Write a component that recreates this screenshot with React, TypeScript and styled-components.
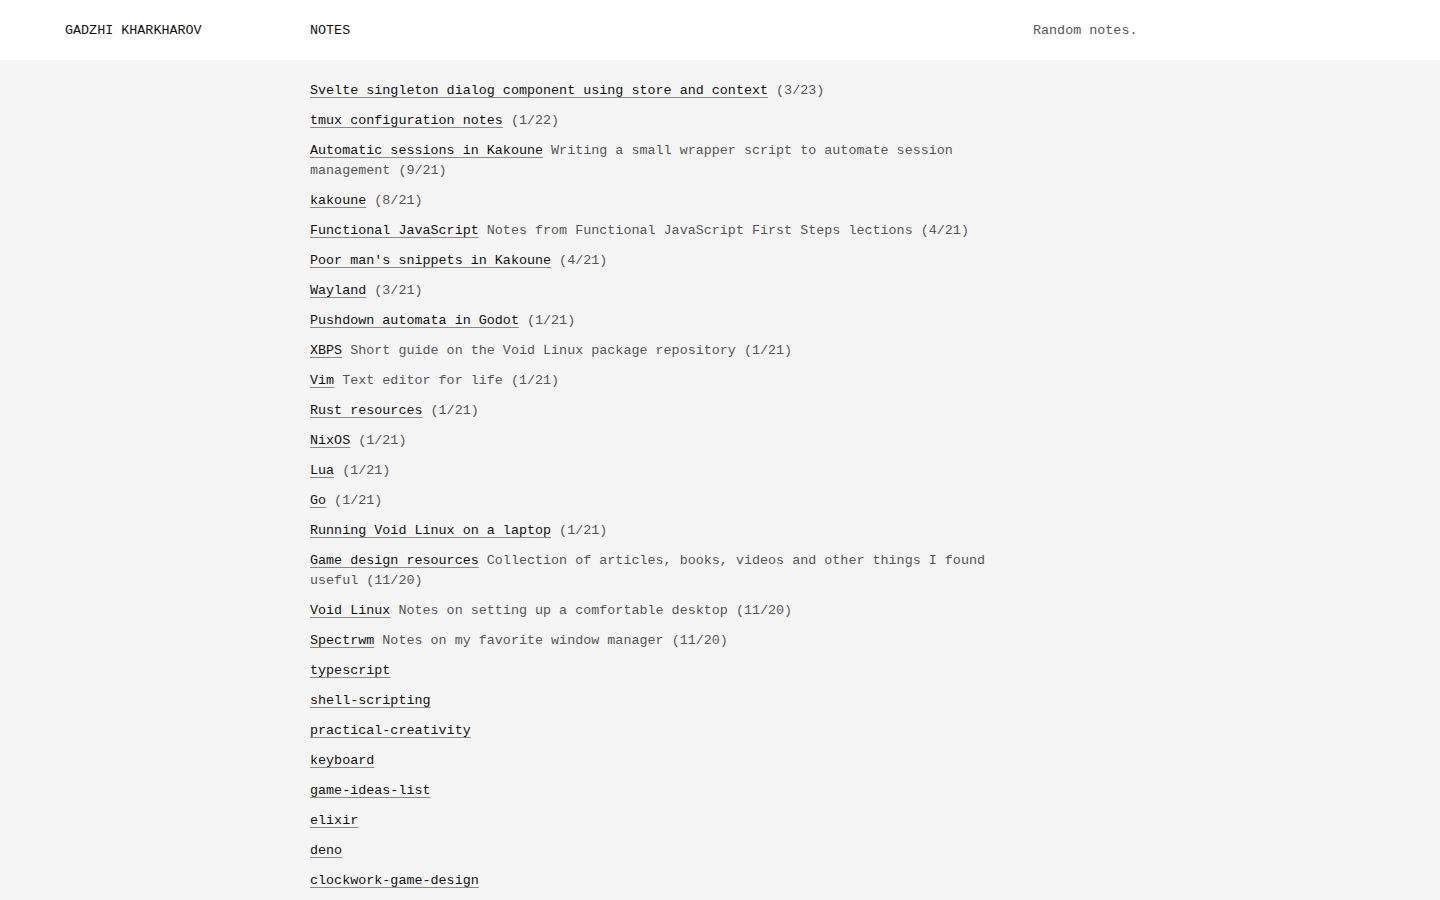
import React from "react";
import styled, { createGlobalStyle } from "styled-components";

const Global = createGlobalStyle`
  html, body { margin: 0; padding: 0; background: #f5f5f5; }
  body {
    font-family: "Liberation Mono", "DejaVu Sans Mono", monospace;
    font-size: 13.4px;
    line-height: 20px;
    color: #111;
  }
  * { box-sizing: border-box; }
`;

const Header = styled.header`
  height: 60px;
  background: #fff;
  display: grid;
  grid-template-columns: 245px 723px 1fr;
  align-items: center;
  padding: 2px 65px 0;
`;

const Brand = styled.a`
  color: #111;
  text-decoration: none;
`;

const NavItem = styled.a`
  color: #111;
  text-decoration: none;
`;

const Tagline = styled.div`
  color: #555;
`;

const Main = styled.main`
  display: grid;
  grid-template-columns: 245px 723px 1fr;
  padding: 21px 65px 20px;
`;

const List = styled.ul`
  grid-column: 2;
  list-style: none;
  margin: 0;
  padding: 0;
  display: flex;
  flex-direction: column;
  gap: 10px;
`;

const Item = styled.li`
  color: #555;
`;

const NoteLink = styled.a`
  color: #111;
  text-decoration: underline;
  text-decoration-color: #8a8a8a;
  text-decoration-thickness: 1px;
  text-underline-offset: 3px;
`;

type Note = { title: string; desc?: string; date?: string };

const notes: Note[] = [
  { title: "Svelte singleton dialog component using store and context", date: "3/23" },
  { title: "tmux configuration notes", date: "1/22" },
  { title: "Automatic sessions in Kakoune", desc: "Writing a small wrapper script to automate session management", date: "9/21" },
  { title: "kakoune", date: "8/21" },
  { title: "Functional JavaScript", desc: "Notes from Functional JavaScript First Steps lections", date: "4/21" },
  { title: "Poor man's snippets in Kakoune", date: "4/21" },
  { title: "Wayland", date: "3/21" },
  { title: "Pushdown automata in Godot", date: "1/21" },
  { title: "XBPS", desc: "Short guide on the Void Linux package repository", date: "1/21" },
  { title: "Vim", desc: "Text editor for life", date: "1/21" },
  { title: "Rust resources", date: "1/21" },
  { title: "NixOS", date: "1/21" },
  { title: "Lua", date: "1/21" },
  { title: "Go", date: "1/21" },
  { title: "Running Void Linux on a laptop", date: "1/21" },
  { title: "Game design resources", desc: "Collection of articles, books, videos and other things I found useful", date: "11/20" },
  { title: "Void Linux", desc: "Notes on setting up a comfortable desktop", date: "11/20" },
  { title: "Spectrwm", desc: "Notes on my favorite window manager", date: "11/20" },
  { title: "typescript" },
  { title: "shell-scripting" },
  { title: "practical-creativity" },
  { title: "keyboard" },
  { title: "game-ideas-list" },
  { title: "elixir" },
  { title: "deno" },
  { title: "clockwork-game-design" },
];

export default function App() {
  return (
    <>
      <Global />
      <Header>
        <Brand href="#">GADZHI KHARKHAROV</Brand>
        <div>
          <NavItem href="#">NOTES</NavItem>
        </div>
        <Tagline>Random notes.</Tagline>
      </Header>
      <Main>
        <List>
          {notes.map((n) => (
            <Item key={n.title}>
              <NoteLink href="#">{n.title}</NoteLink>
              {n.desc ? ` ${n.desc}` : ""}
              {n.date ? ` (${n.date})` : ""}
            </Item>
          ))}
        </List>
      </Main>
    </>
  );
}
